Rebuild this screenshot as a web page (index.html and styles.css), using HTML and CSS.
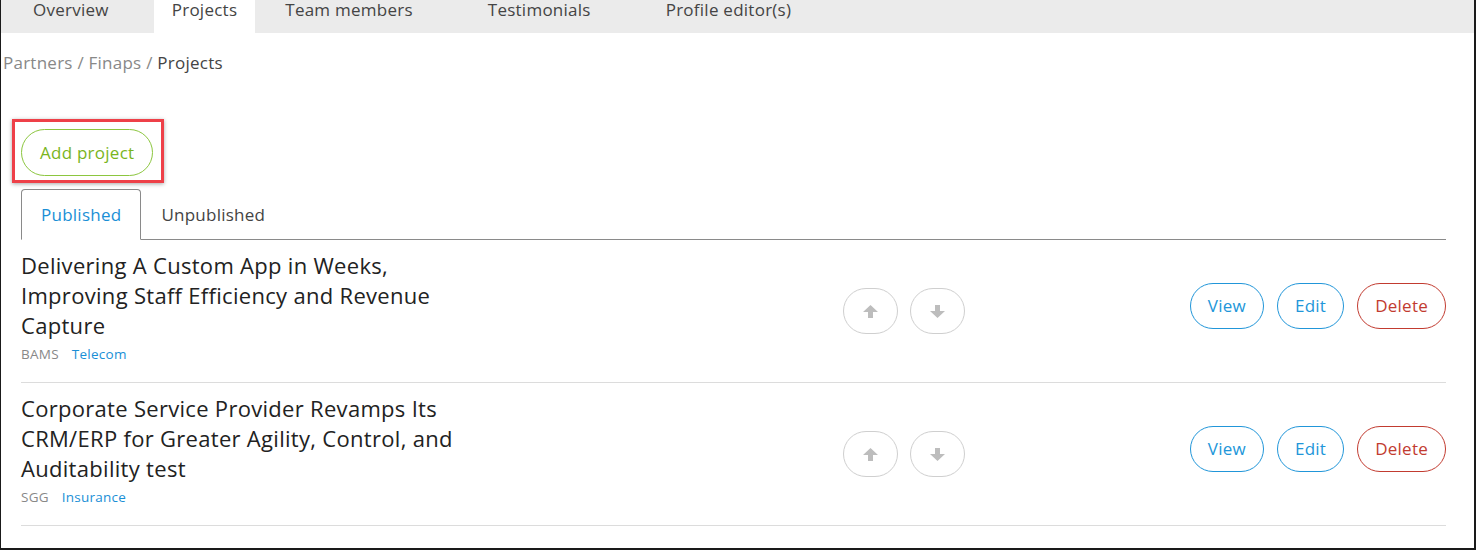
FILE: index.html
```html
<!DOCTYPE html>
<html>
<head>
<meta charset="utf-8">
<link rel="stylesheet" href="styles.css">
</head>
<body>
<div class="frame">
  <nav class="topnav">
    <a class="topnav-item">Overview</a>
    <a class="topnav-item is-active">Projects</a>
    <a class="topnav-item">Team members</a>
    <a class="topnav-item">Testimonials</a>
    <a class="topnav-item">Profile editor(s)</a>
  </nav>
  <div class="breadcrumb">
    <a class="crumb">Partners</a> <span class="sep">/</span> <a class="crumb">Finaps</a> <span class="sep">/</span> <span class="crumb-current">Projects</span>
  </div>
  <main class="content">
    <div class="add-wrap">
      <button class="btn btn-green">Add project</button>
      <span class="highlight"></span>
    </div>
    <div class="subtabs">
      <a class="subtab is-active">Published</a>
      <a class="subtab">Unpublished</a>
    </div>
    <ul class="projects">
      <li class="project">
        <div class="project-info">
          <h3 class="project-title">Delivering A Custom App in Weeks, Improving Staff Efficiency and Revenue Capture</h3>
          <div class="project-meta"><span class="client">BAMS</span><a class="industry">Telecom</a></div>
        </div>
        <div class="order">
          <button class="btn btn-order" aria-label="Move up"><svg width="15" height="13" viewBox="0 0 15 13"><path d="M7.5 0 L15 7 H10 V13 H5 V7 H0 Z" fill="#bdbdbd"/></svg></button>
          <button class="btn btn-order" aria-label="Move down"><svg width="15" height="13" viewBox="0 0 15 13"><path d="M7.5 13 L15 6 H10 V0 H5 V6 H0 Z" fill="#bdbdbd"/></svg></button>
        </div>
        <div class="actions">
          <button class="btn btn-blue">View</button>
          <button class="btn btn-blue">Edit</button>
          <button class="btn btn-red">Delete</button>
        </div>
      </li>
      <li class="project">
        <div class="project-info">
          <h3 class="project-title">Corporate Service Provider Revamps Its CRM/ERP for Greater Agility, Control, and Auditability test</h3>
          <div class="project-meta"><span class="client">SGG</span><a class="industry">Insurance</a></div>
        </div>
        <div class="order">
          <button class="btn btn-order" aria-label="Move up"><svg width="15" height="13" viewBox="0 0 15 13"><path d="M7.5 0 L15 7 H10 V13 H5 V7 H0 Z" fill="#bdbdbd"/></svg></button>
          <button class="btn btn-order" aria-label="Move down"><svg width="15" height="13" viewBox="0 0 15 13"><path d="M7.5 13 L15 6 H10 V0 H5 V6 H0 Z" fill="#bdbdbd"/></svg></button>
        </div>
        <div class="actions">
          <button class="btn btn-blue">View</button>
          <button class="btn btn-blue">Edit</button>
          <button class="btn btn-red">Delete</button>
        </div>
      </li>
    </ul>
  </main>
</div>
</body>
</html>
```

FILE: styles.css
```css
* { box-sizing: border-box; }
html, body { margin: 0; padding: 0; background: #fff; }
body { font-family: "Open Sans", "Liberation Sans", sans-serif; color: #333; letter-spacing: 0.25px; }

.frame {
  width: 1476px;
  height: 550px;
  border-left: 1px solid #1a1a1a;
  border-right: 2px solid #1a1a1a;
  border-bottom: 2px solid #1a1a1a;
  overflow: hidden;
}

.topnav {
  display: flex;
  height: 33px;
  background: #ebebeb;
  padding-left: 14px;
}
.topnav-item {
  display: block;
  padding: 0 18px;
  font-size: 17px;
  line-height: 20px;
  color: #444;
  height: 33px;
}
.topnav-item:nth-child(2) { margin-left: 27px; }
.topnav-item:nth-child(3) { margin-left: 12px; }
.topnav-item:nth-child(4) { margin-left: 39px; }
.topnav-item:nth-child(5) { margin-left: 39px; }
.topnav-item.is-active { background: #fff; }

.breadcrumb {
  margin-top: 18px;
  padding-left: 2px;
  font-size: 17px;
  line-height: 24px;
  color: #888;
}
.crumb { color: #888; }
.crumb-current { color: #444; }

.content { padding: 0 28px 0 20px; }

.add-wrap {
  position: relative;
  display: inline-block;
  margin-top: 54px;
}
.highlight {
  position: absolute;
  top: -10px;
  left: -9px;
  right: -11px;
  bottom: -7px;
  border: 3px solid #ee4048;
  box-shadow: 0 1px 4px rgba(0,0,0,0.35);
  pointer-events: none;
}

.btn {
  font-family: "Open Sans", "Liberation Sans", sans-serif;
  font-size: 17px;
  letter-spacing: 0.25px;
  background: #fff;
  border: 1px solid #ccc;
  border-radius: 24px;
  height: 46px;
  padding: 0 17px;
  cursor: pointer;
  display: inline-flex;
  align-items: center;
  justify-content: center;
}
.btn-green {
  height: 47px;
  padding: 0 18px;
  color: #7ab51d;
  border-color: #8cc63f;
  display: flex;
}
.btn-blue { color: #2196d9; border-color: #2196d9; }
.btn-red { color: #c23b30; border-color: #c23b30; }
.btn-order { width: 55px; padding: 0; border-color: #cfcfcf; }

.subtabs {
  display: flex;
  margin-top: 13px;
  border-bottom: 1px solid #8a8a8a;
  height: 51px;
}
.subtab {
  display: flex;
  align-items: center;
  padding: 0 20px;
  font-size: 17px;
  color: #444;
  height: 51px;
}
.subtab.is-active {
  color: #1a8fd6;
  border: 1px solid #8a8a8a;
  border-bottom: 1px solid #fff;
  border-radius: 4px 4px 0 0;
  padding: 0 19px;
  background: #fff;
}

.projects { list-style: none; margin: 0; padding: 0; }
.project {
  display: grid;
  grid-template-columns: 822px auto 1fr;
  align-items: center;
  padding: 10px 0 18px;
  border-bottom: 1px solid #dcdcdc;
}
.project-title {
  margin: 0;
  width: 455px;
  font-size: 22px;
  letter-spacing: 0.3px;
  line-height: 30px;
  font-weight: 400;
  color: #222;
}
.project-meta {
  margin-top: 4px;
  font-size: 13.5px;
  line-height: 20px;
}
.client { color: #888; margin-right: 13px; }
.industry { color: #1a8fd6; }

.order { display: flex; gap: 12px; margin-top: 8px; }
.actions { display: flex; gap: 13px; justify-content: flex-end; margin-bottom: 3px; }
```
